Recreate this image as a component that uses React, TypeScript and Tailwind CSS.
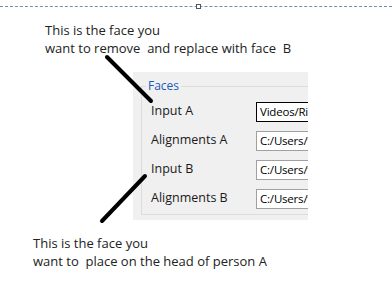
import React from 'react';

const Field: React.FC<{ label: string; value: string; focused?: boolean }> = ({ label, value, focused }) => (
    <div className="flex items-center h-[29px]">
        <span className="w-[114px] shrink-0 pl-[9px] text-[12.5px] text-[#1a1a1a]">{label}</span>
        <div className={`h-[20px] flex-1 min-w-0 bg-white border border-r-0 pl-[3px] flex items-center text-[11.5px] tracking-[-0.2px] text-black whitespace-nowrap overflow-hidden ${focused ? 'border-black' : 'border-[#a0a0a0]'}`}>
            {value}
        </div>
    </div>
);

const App: React.FC = () => {
    return (
        <div className="relative w-[392px] h-[291px] bg-white overflow-hidden font-['Open_Sans','Liberation_Sans',sans-serif]">
            {/* page edge */}
            <div className="absolute left-0 top-[6px] w-full border-t border-dashed border-[#6f8fae]" />
            <div className="absolute left-[196px] top-[4px] w-[5px] h-[5px] bg-white border border-[#555]" />

            <div className="pt-[21px] pl-[45px] text-[13px] leading-[18px] text-[#222]">
                <div>This is the face you</div>
                <div className="whitespace-pre">want to remove  and replace with face  B</div>
            </div>

            <div className="ml-[133px] mt-[15px] w-[175px] h-[148px] bg-[#f0f0f0] pt-[9px] pl-[8px]">
                <div className="relative h-[129px] border border-[#dcdcdc] border-r-0 mt-[5px]">
                    <span className="absolute -top-[9px] left-[4px] px-[2px] bg-[#f0f0f0] text-[12px] leading-[16px] text-[#1a5ab8]">Faces</span>
                    <div className="pt-[10px]">
                        <Field label="Input A" value="Videos/Ri" focused />
                        <Field label="Alignments A" value="C:/Users/t" />
                        <Field label="Input B" value="C:/Users/t" />
                        <Field label="Alignments B" value="C:/Users/t" />
                    </div>
                </div>
            </div>

            <div className="pt-[14px] pl-[33px] text-[13px] leading-[18px] text-[#222]">
                <div>This is the face you</div>
                <div className="whitespace-pre">want to  place on the head of person A</div>
            </div>

            <svg className="absolute left-0 top-0" width="392" height="291">
                <line x1="107" y1="57" x2="151" y2="101" stroke="#000" strokeWidth="4" strokeLinecap="round" />
                <line x1="102" y1="221" x2="145" y2="176" stroke="#000" strokeWidth="4" strokeLinecap="round" />
            </svg>
        </div>
    );
};

export default App;
